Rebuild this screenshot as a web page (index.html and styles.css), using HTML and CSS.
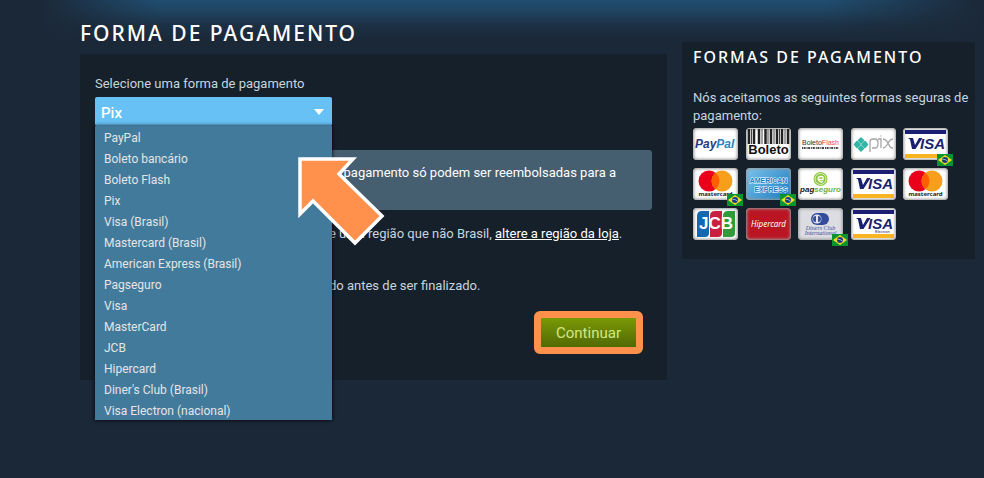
FILE: index.html
```html
<!DOCTYPE html>
<html lang="pt-BR">
<head>
  <meta charset="UTF-8" />
  <meta name="viewport" content="width=device-width, initial-scale=1.0"/>
  <title>Forma de pagamento</title>
  <link rel="stylesheet" href="styles.css">
</head>
<body>
  <div class="page">
    <main class="checkout">
      <h1>FORMA DE PAGAMENTO</h1>

      <form class="panel">
        <label for="method">Selecione uma forma de pagamento</label>
        <div class="dropdown">
          <select id="method" name="method">
            <option>Pix</option>
          </select>
          <svg class="caret" viewBox="0 0 10 6"><path d="M0 0h10L5 6z" fill="#fff"/></svg>
          <ul class="menu">
            <li><button type="button">PayPal</button></li>
            <li><button type="button">Boleto bancário</button></li>
            <li><button type="button">Boleto Flash</button></li>
            <li><button type="button">Pix</button></li>
            <li><button type="button">Visa (Brasil)</button></li>
            <li><button type="button">Mastercard (Brasil)</button></li>
            <li><button type="button">American Express (Brasil)</button></li>
            <li><button type="button">Pagseguro</button></li>
            <li><button type="button">Visa</button></li>
            <li><button type="button">MasterCard</button></li>
            <li><button type="button">JCB</button></li>
            <li><button type="button">Hipercard</button></li>
            <li><button type="button">Diner's Club (Brasil)</button></li>
            <li><button type="button">Visa Electron (nacional)</button></li>
          </ul>
          <svg class="arrow" viewBox="0 0 90 90">
            <path d="M2 2H55L41 17L84 59L57 86L15 44L2 57Z" fill="#ff914d" stroke="#fff" stroke-width="3.5"/>
          </svg>
        </div>

        <p class="notice">pagamento só podem ser reembolsadas para a</p>
        <p class="region">e uma região que não Brasil, <a href="#">altere a região da loja</a>.</p>
        <p class="review">do antes de ser finalizado.</p>

        <div class="actions">
          <button type="submit" class="continue">Continuar</button>
        </div>
      </form>
    </main>

    <aside class="accepted">
      <h2>FORMAS DE PAGAMENTO</h2>
      <p>Nós aceitamos as seguintes formas seguras de pagamento:</p>

      <svg class="defs" width="0" height="0">
        <symbol id="flag" viewBox="0 0 16 12">
          <rect width="16" height="12" fill="#079332"/>
          <path d="M8 1L15 6L8 11L1 6Z" fill="#f5dc1c"/>
          <circle cx="8" cy="6" r="3" fill="#173b80"/>
          <path d="M5.3 5.2Q8.5 5 10.6 7.2" fill="none" stroke="#d8e4ee" stroke-width=".7"/>
        </symbol>
        <symbol id="visa" viewBox="0 0 45 32">
          <rect x="2" y="2" width="41" height="4" fill="#1a1f71"/>
          <rect x="2" y="26" width="41" height="4" fill="#f7b621"/>
          <path d="M5 10h5l2 7l4-7h3.500l-7 11h-3.500L7 11.500z" fill="#1a1f71"/>
          <text x="17" y="21" class="visa-text">ISA</text>
        </symbol>
        <symbol id="mastercard" viewBox="0 0 45 32">
          <circle cx="16" cy="13" r="10.500" fill="#eb001b"/>
          <circle cx="29" cy="13" r="10.500" fill="#f79e1b"/>
          <path d="M22.500 4.800A10.500 10.500 0 0 1 22.500 21.200A10.500 10.500 0 0 1 22.500 4.800Z" fill="#ff5f00"/>
          <text x="22.500" y="28" text-anchor="middle" class="mc-text">mastercard</text>
        </symbol>
      </svg>

      <ul class="cards">
        <li>
          <svg viewBox="0 0 45 32" role="img" aria-label="PayPal">
            <text x="2" y="20" class="paypal-text" fill="#253b80">Pay<tspan fill="#2c83bd">Pal</tspan></text>
          </svg>
        </li>
        <li>
          <svg viewBox="0 0 45 32" role="img" aria-label="Boleto">
            <path d="M3 1v15M8 1v15M13 1v15M19.500 1v15M25 1v15M31 1v15M36 1v15M42 1v15" stroke="#222" stroke-width="2.500"/>
            <path d="M5.500 1v15M16 1v15M22 1v15M28 1v15M33.500 1v15M39 1v15" stroke="#444"/>
            <text x="22.500" y="26" text-anchor="middle" class="boleto-text">Boleto</text>
          </svg>
        </li>
        <li>
          <svg viewBox="0 0 45 32" role="img" aria-label="Boleto Flash">
            <text x="22.500" y="17" text-anchor="middle" class="flash-text" fill="#333">Boleto<tspan fill="#e94b4b">Flash</tspan></text>
            <path d="M4 20h37" stroke="#444" stroke-width="2" stroke-dasharray="1 .6 2 1"/>
          </svg>
        </li>
        <li>
          <svg viewBox="0 0 45 32" role="img" aria-label="Pix">
            <path d="M10 10l2.500 2.500L10 15l-2.500-2.500zM10 18l2.500 2.500L10 23l-2.500-2.500zM6 13.500L9 16.500L6 19.500L3.500 16.500zM14 13.500l2.500 3L14 19.500L11 16.500z" fill="#32b5a4" stroke="#32b5a4" stroke-width="1.500" stroke-linejoin="round"/>
            <path d="M19 24V14Q19 11 22 11H24Q27 11 27 15.500T24 20H21M27 11H30V20M29.800 7.500v1M32 11Q34 11 36 13.500L38 17Q39 20 42 20M42 11Q40 11 38 13.500L36 17Q34 20 32 20" fill="none" stroke="#a4a4a4" stroke-width="1.300"/>
          </svg>
        </li>
        <li>
          <svg viewBox="0 0 45 32" role="img" aria-label="Visa (Brasil)"><use href="#visa"/></svg>
          <svg class="flag"><use href="#flag"/></svg>
        </li>
        <li>
          <svg viewBox="0 0 45 32" role="img" aria-label="Mastercard (Brasil)"><use href="#mastercard"/></svg>
          <svg class="flag"><use href="#flag"/></svg>
        </li>
        <li class="amex">
          <svg viewBox="0 0 45 32" role="img" aria-label="American Express (Brasil)">
            <text x="22.500" y="15" text-anchor="middle" class="amex-text">AMERICAN</text>
            <text x="25" y="24" text-anchor="middle" class="amex-text">EXPRESS</text>
          </svg>
          <svg class="flag"><use href="#flag"/></svg>
        </li>
        <li>
          <svg viewBox="0 0 45 32" role="img" aria-label="Pagseguro">
            <circle cx="22.500" cy="11" r="7" fill="#8cc63f"/>
            <circle cx="22.500" cy="11" r="5.500" fill="none" stroke="#fff" stroke-width=".7"/>
            <path d="M20 11.500H25Q26 8 22.500 8.500T20.500 12T25 13.500" fill="none" stroke="#fff" stroke-width="1.300"/>
            <text x="22.500" y="24" text-anchor="middle" class="pag-text" fill="#222">pag<tspan fill="#6cb33f">seguro</tspan></text>
          </svg>
        </li>
        <li>
          <svg viewBox="0 0 45 32" role="img" aria-label="Visa"><use href="#visa"/></svg>
        </li>
        <li>
          <svg viewBox="0 0 45 32" role="img" aria-label="MasterCard"><use href="#mastercard"/></svg>
        </li>
        <li>
          <svg viewBox="0 0 45 32" role="img" aria-label="JCB">
            <path d="M9 3H16V25Q16 29 12 29H4V8Q4 3 9 3Z" fill="#1468ad"/>
            <path d="M22 3H29V25Q29 29 25 29H17V8Q17 3 22 3Z" fill="#c91f40"/>
            <path d="M35 3H42V25Q42 29 38 29H30V8Q30 3 35 3Z" fill="#319b3c"/>
            <text x="23" y="21" text-anchor="middle" class="jcb-text">JCB</text>
          </svg>
        </li>
        <li class="hiper">
          <svg viewBox="0 0 45 32" role="img" aria-label="Hipercard">
            <text x="22.500" y="19" text-anchor="middle" class="hiper-text">Hipercard</text>
          </svg>
        </li>
        <li class="diners">
          <svg viewBox="0 0 45 32" role="img" aria-label="Diner's Club (Brasil)">
            <path d="M19 5H25A6 6 0 0 1 25 17H19Z" fill="#344d9b"/>
            <circle cx="19" cy="11" r="6" fill="#344d9b"/>
            <circle cx="19" cy="11" r="4.500" fill="#e4e6ef"/>
            <path d="M18 8A3 3 0 0 0 18 14ZM20 8A3 3 0 0 1 20 14Z" fill="#344d9b"/>
            <text x="22.500" y="22" text-anchor="middle" class="diners-text">Diners Club</text>
            <text x="22.500" y="27" text-anchor="middle" class="diners-text">International</text>
          </svg>
          <svg class="flag"><use href="#flag"/></svg>
        </li>
        <li>
          <svg viewBox="0 0 45 32" role="img" aria-label="Visa Electron">
            <use href="#visa"/>
            <text x="24" y="25" class="electron-text">Electron</text>
          </svg>
        </li>
      </ul>
    </aside>
  </div>
</body>
</html>
```
FILE: styles.css
```css
* {
  box-sizing: border-box;
}

body {
  margin: 0;
  min-height: 100vh;
  font-family: Roboto, "Noto Sans", sans-serif;
  font-size: 13px;
  line-height: 18px;
  color: #c6d4df;
  background:
    linear-gradient(90deg, #1b2838 4%, transparent 16%, transparent 84%, #1b2838 100%) 0 0 / 100% 40px no-repeat,
    linear-gradient(#204d70, #1f4562 25%, #1c3044 65%, #1b2838) 0 0 / 100% 40px no-repeat,
    #1b2838;
}

h1,
h2,
p,
ul {
  margin: 0;
  padding: 0;
}

ul {
  list-style: none;
}

.page {
  display: flex;
  align-items: flex-start;
  gap: 15px;
  padding: 0 9px 0 80px;
}

.checkout {
  flex: 1;
  padding-top: 18px;
}

h1,
h2 {
  font-family: "Noto Sans", sans-serif;
  font-weight: 500;
  letter-spacing: 2px;
  color: #fff;
}

h1 {
  margin-bottom: 6px;
  font-size: 21px;
  line-height: 30px;
}

.panel {
  padding: 21px 15px 26px;
  background: #16202b;
}

.panel label {
  display: block;
  margin-bottom: 4px;
}

.dropdown {
  position: relative;
  width: 237px;
}

.dropdown select {
  display: block;
  width: 100%;
  height: 29px;
  padding: 2px 6px 0;
  appearance: none;
  border: none;
  border-radius: 2px;
  background: #67c1f5;
  color: #fff;
  font-family: inherit;
  font-size: 15px;
  font-weight: 500;
}

.caret {
  position: absolute;
  top: 12px;
  right: 8px;
  width: 10px;
  height: 6px;
}

.menu {
  position: absolute;
  top: 29px;
  left: 0;
  z-index: 1;
  width: 100%;
  background: #417a9b;
  box-shadow: 0 0 4px #000;
}

.menu button {
  display: block;
  width: 100%;
  height: 21px;
  padding: 3px 9px 0;
  border: none;
  background: none;
  color: #e5e5e5;
  font-family: inherit;
  font-size: 12px;
  line-height: 18px;
  text-align: left;
  cursor: pointer;
}

.menu button:hover {
  background: #67c1f5;
}

.arrow {
  position: absolute;
  top: 60px;
  left: 203px;
  z-index: 2;
  width: 90px;
  height: 90px;
}

.notice {
  min-height: 60px;
  margin-top: 24px;
  padding: 14px 36px 14px 120px;
  border-radius: 3px;
  background: #455e70;
  color: #fff;
  text-align: right;
}

.region,
.review {
  padding-left: 234px;
}

.region {
  margin-top: 15px;
}

.region a {
  color: #fff;
}

.review {
  margin-top: 34px;
}

.actions {
  display: flex;
  justify-content: flex-end;
  margin-top: 16px;
  padding-right: 9px;
}

.continue {
  width: 109px;
  height: 43px;
  padding: 0;
  border: 7px solid #ff914d;
  border-radius: 6px;
  background: linear-gradient(#799905, #536904) padding-box;
  color: #d2e885;
  font-family: inherit;
  font-size: 15px;
  cursor: pointer;
}

.accepted {
  width: 293px;
  margin-top: 42px;
  padding: 3px 4px 19px 11px;
  background: #16202b;
}

.accepted h2 {
  margin-bottom: 20px;
  font-size: 16px;
  line-height: 24px;
}

.defs {
  position: absolute;
}

.cards {
  display: grid;
  grid-template-columns: repeat(5, 45px);
  justify-content: space-between;
  row-gap: 8px;
  width: 255px;
  margin-top: 3px;
}

.cards li {
  position: relative;
  height: 32px;
  border-radius: 4px;
  background: #fff;
  box-shadow: inset 0 0 3px 1px #9a9a9a;
}

.cards svg {
  display: block;
  width: 45px;
  height: 32px;
}

.cards .flag {
  position: absolute;
  right: -5px;
  bottom: -6px;
  width: 16px;
  height: 12px;
}

.cards .amex {
  background: linear-gradient(135deg, #7cc4ec, #1878bd);
}

.cards .hiper {
  background: #b91522;
}

.cards .diners {
  background: #dcdde3;
}

.cards text,
.defs text {
  font-family: "Liberation Sans", sans-serif;
  font-weight: bold;
}

.visa-text {
  font-size: 15px;
  font-style: italic;
  fill: #1a1f71;
}

.cards .mc-text,
.defs .mc-text {
  font-family: "Noto Sans", sans-serif;
  font-size: 6px;
  fill: #222;
}

.paypal-text {
  font-size: 12px;
  font-style: italic;
}

.boleto-text {
  font-size: 13px;
  fill: #111;
  stroke: #fff;
  stroke-width: 2px;
  paint-order: stroke;
}

.cards .flash-text {
  font-size: 7px;
  font-weight: 400;
}

.amex-text {
  font-size: 7px;
  fill: #1878bd;
  stroke: #fff;
  stroke-width: 1px;
  paint-order: stroke;
}

.pag-text {
  font-size: 8px;
  font-style: italic;
}

.jcb-text {
  font-size: 17px;
  fill: #fff;
}

.cards .hiper-text {
  font-family: "Noto Sans", sans-serif;
  font-size: 8px;
  font-weight: 400;
  font-style: italic;
  fill: #fff;
}

.cards .diners-text {
  font-family: "Liberation Serif", serif;
  font-size: 6px;
  font-weight: 400;
  font-style: italic;
  fill: #344d9b;
}

.cards .electron-text {
  font-size: 4px;
  font-weight: 400;
  fill: #1a1f71;
}
```
